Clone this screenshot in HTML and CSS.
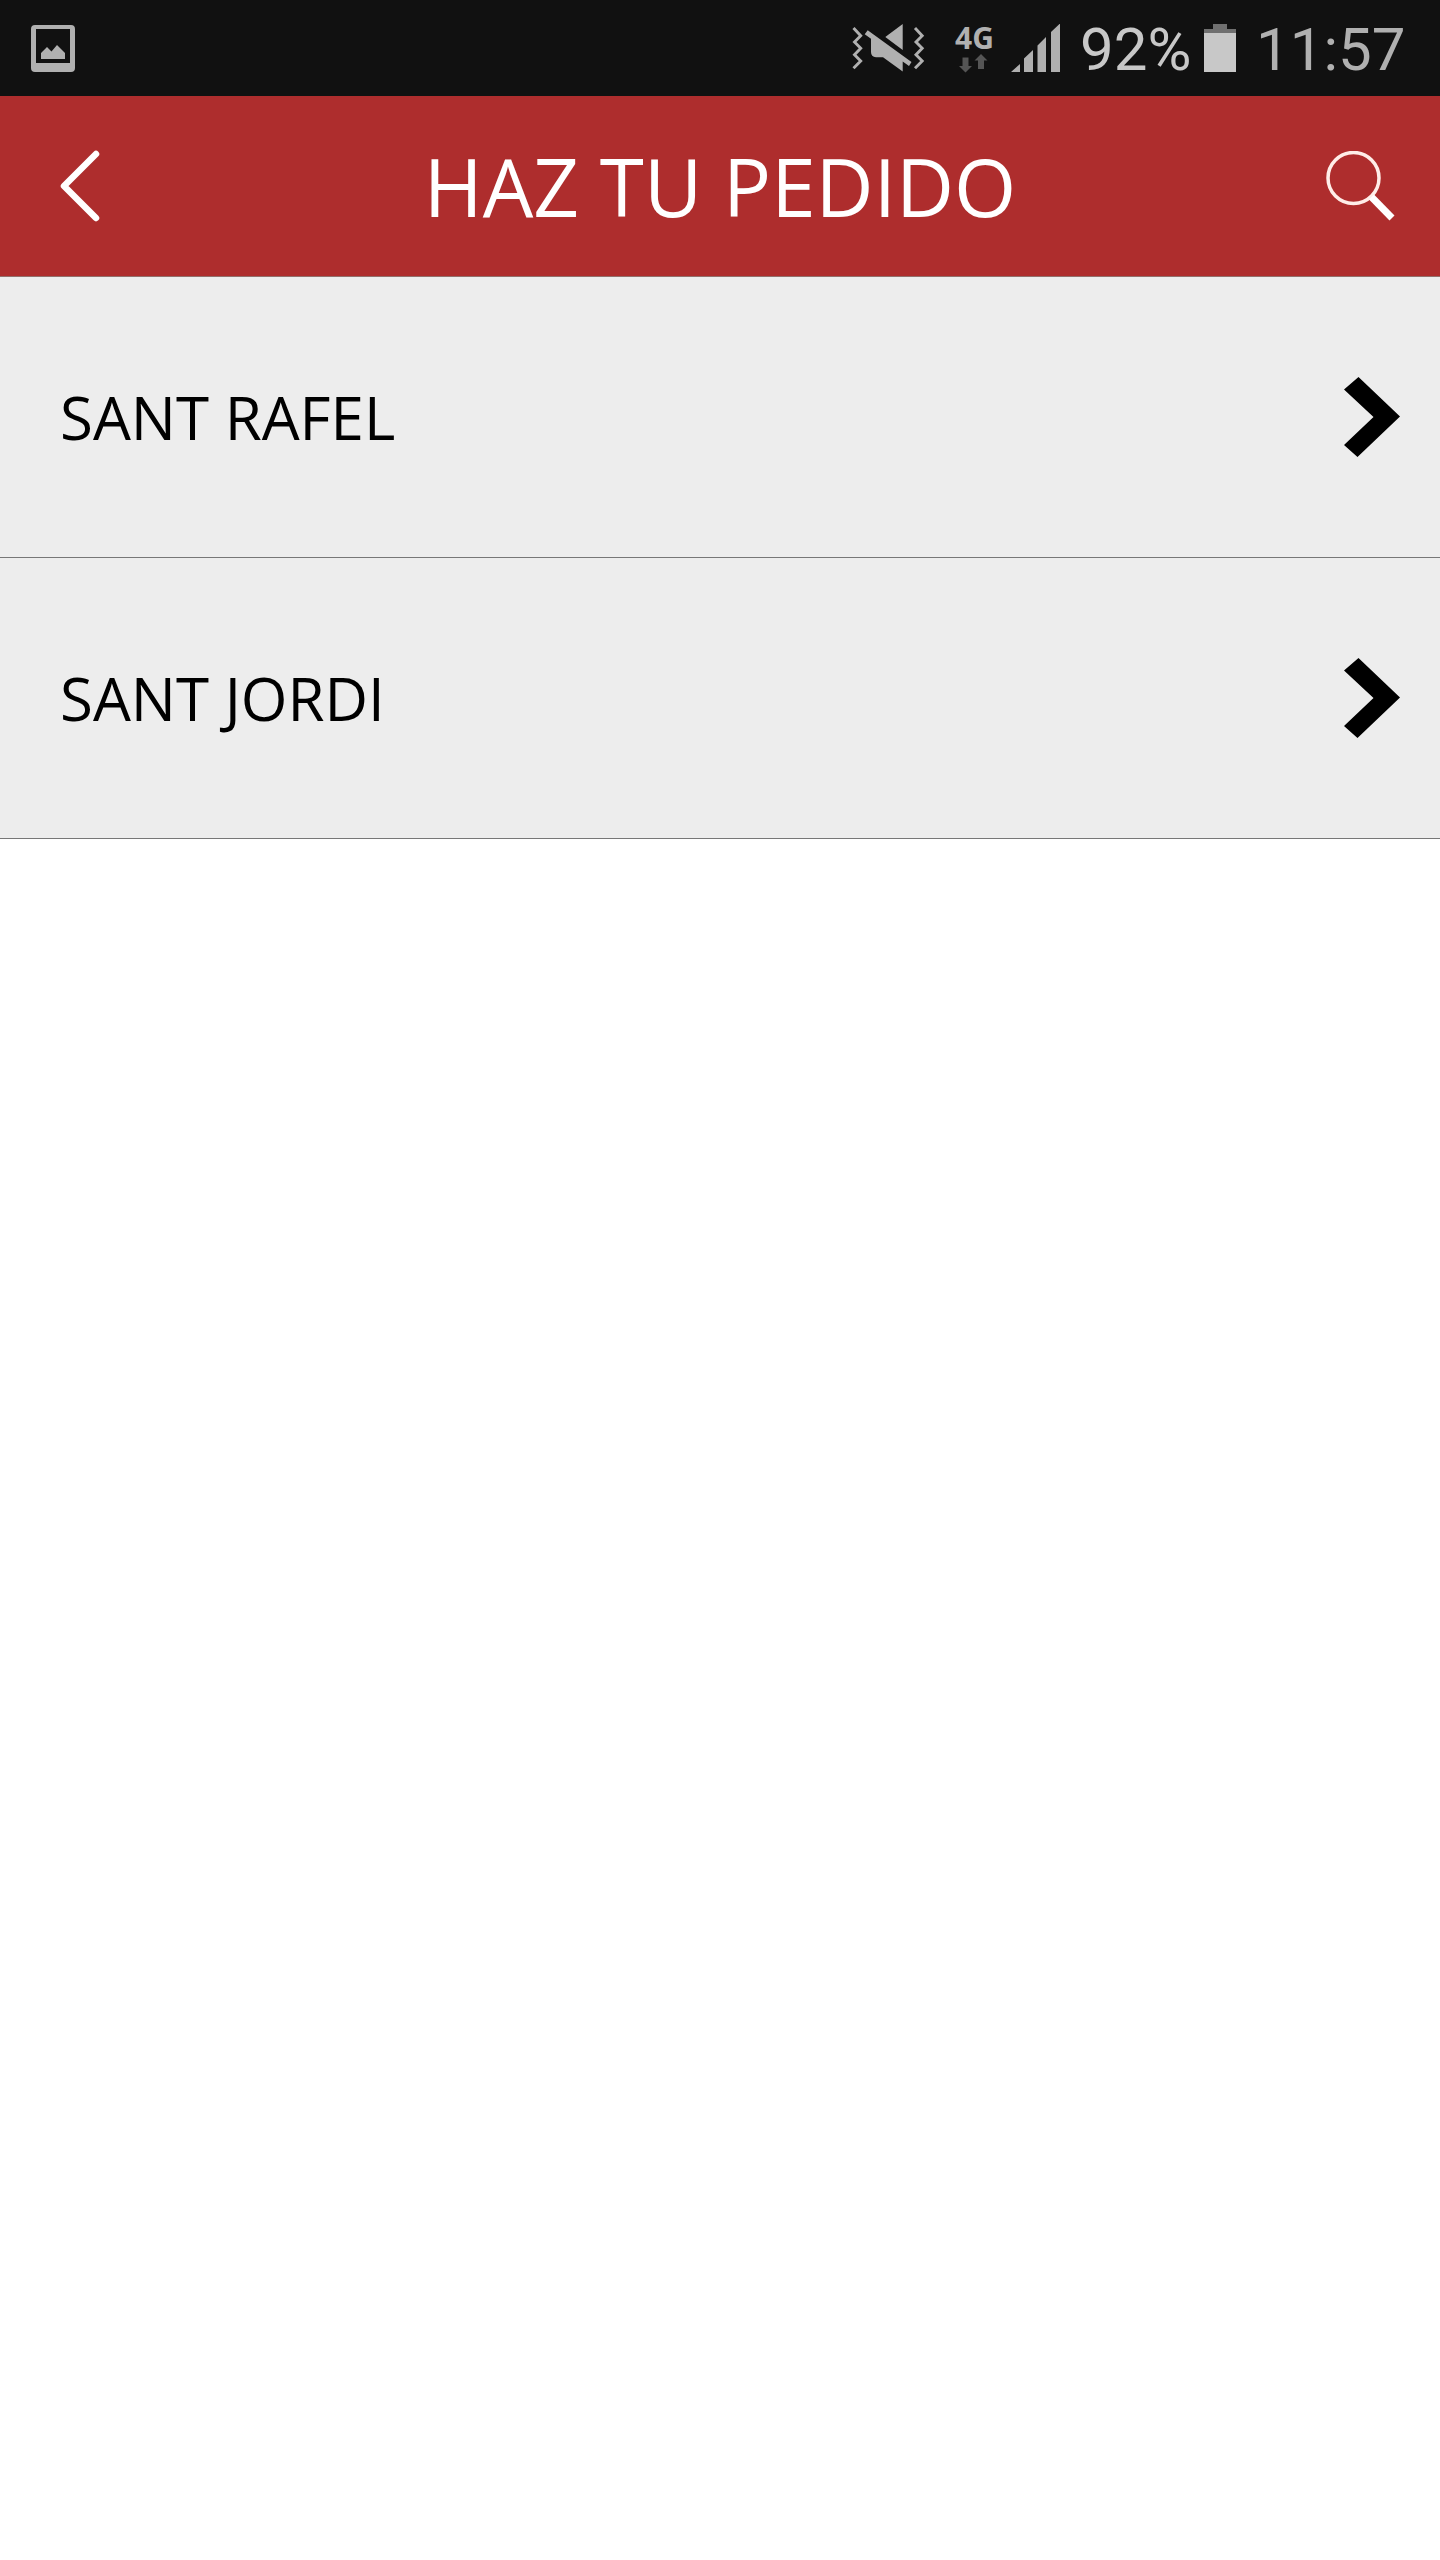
FILE: index.html
```html
<!DOCTYPE html>
<html lang="es">
<head>
<meta charset="utf-8">
<title>Haz tu pedido</title>
<link rel="stylesheet" href="styles.css">
</head>
<body>
<div class="status-bar">
  <svg class="icon-picture" width="44" height="47" viewBox="0 0 44 47"><path fill="#b0b0b0" fill-rule="evenodd" d="M4 0H40Q44 0 44 4V43Q44 47 40 47H4Q0 47 0 43V4Q0 0 4 0ZM5 4V38H39V4Z"/><path fill="#b0b0b0" d="M10 34V28L16 22L20.500 26.500L26 20L34 28V34Z"/></svg>
  <div class="indicators">
    <svg class="icon-mute" width="74" height="50" viewBox="0 0 74 50"><path fill="none" stroke="#b0b0b0" stroke-width="2.900" d="M1.500 4L8.700 11.700L2.500 18L8.700 24.300L2.500 30.700L8.700 37L1.500 44.300M63 4L70.200 11.700L64 18L70.200 24.300L64 30.700L70.200 37L63 44.300"/><path fill="#b0b0b0" d="M50.700 0V26L33.300 13ZM15.700 6.300L59.500 38L57 42L50.700 37.500V47.500L31 33.300H24Q19 33 19 28V14.700L12.700 10.300Z"/></svg>
    <div class="network">
      <span class="network-type">4G</span>
      <svg width="29" height="19" viewBox="0 0 29 19"><path fill="#555" d="M3.500 3.500H9.500V12H13L6.500 18.500L0 12H3.500ZM22 0L28.500 6.500H25V15H19V6.500H15.500Z"/></svg>
    </div>
    <svg class="icon-signal" width="49" height="48" viewBox="0 0 49 48"><path fill="#b0b0b0" d="M0 48L9 40V48ZM13 48V34.500L22 26V48ZM26.500 48V21.500L35 13V48ZM40 48V8L49 -.5V48Z"/></svg>
    <span class="battery-level">92%</span>
    <svg class="icon-battery" width="32" height="48" viewBox="0 0 32 48"><path fill="#707070" d="M9 0H23V5H32V9H0V5H9Z"/><path fill="#c8c8c8" d="M0 9H32V48H0Z"/></svg>
    <span class="clock">11:57</span>
  </div>
</div>
<header class="app-header">
  <svg class="icon-back" width="40" height="72" viewBox="0 0 40 72"><path fill="none" stroke="#fff" stroke-width="6.500" stroke-linecap="round" stroke-linejoin="round" d="M36 4L4 36L36 68"/></svg>
  <h1 class="title">HAZ TU PEDIDO</h1>
  <svg class="icon-search" width="70" height="70" viewBox="0 0 70 70"><circle cx="27.500" cy="27" r="25.500" fill="none" stroke="#ffede8" stroke-width="3.500"/><path stroke="#fff" stroke-width="7" d="M45.500 46L66 67"/></svg>
</header>
<main class="list">
  <div class="row">
    <span class="row-label">SANT RAFEL</span>
    <svg width="56" height="80" viewBox="0 0 56 80"><path d="M14.500 0L56 39.500L13.500 80L0 68L29.500 40L0 12.500Z"/></svg>
  </div>
  <div class="row">
    <span class="row-label">SANT JORDI</span>
    <svg width="56" height="80" viewBox="0 0 56 80"><path d="M14.500 0L56 39.500L13.500 80L0 68L29.500 40L0 12.500Z"/></svg>
  </div>
</main>
</body>
</html>
```
FILE: styles.css
```css
* { box-sizing: border-box; }
body { margin: 0; min-height: 2560px; background: #fff; font-family: "Open Sans", "Noto Sans", sans-serif; }
svg { display: block; flex: none; }
.status-bar { display: flex; justify-content: space-between; height: 96px; padding-left: 31px; background: #111; color: #b0b0b0; }
.icon-picture { margin-top: 25px; }
.indicators { display: flex; align-items: flex-start; width: 588px; }
.icon-mute { margin-top: 24px; }
.network { width: 46px; margin: 23px 0 0 29px; }
.network-type { display: block; height: 31px; font-size: 30px; font-weight: 700; line-height: 30px; }
.network svg { margin-left: 4px; }
.icon-signal { margin: 24px 0 0 10px; }
.battery-level, .clock { font-family: Roboto, sans-serif; font-size: 60px; line-height: 70px; white-space: nowrap; }
.battery-level { width: 124px; margin-top: 15px; padding-left: 20px; color: #c8c8c8; }
.icon-battery { margin: 24px 0 0 20px; }
.clock { margin: 15px 0 0 20px; }
.app-header { display: grid; grid-template-columns: 1fr auto 1fr; align-items: center; height: 181px; padding: 0 44px; background: #ae2d2d; border-bottom: 1px solid #92706c; color: #fff; }
.icon-back { margin-left: 16px; }
.icon-search { justify-self: end; }
.title { margin: 0; font-size: 80px; font-weight: 400; line-height: 110px; white-space: nowrap; }
.row { display: flex; align-items: center; justify-content: space-between; height: 281px; padding: 0 40px 0 60px; background: #ededed; border-bottom: 1px solid #777; color: #000; }
.row-label { font-size: 60px; line-height: 82px; }
```
